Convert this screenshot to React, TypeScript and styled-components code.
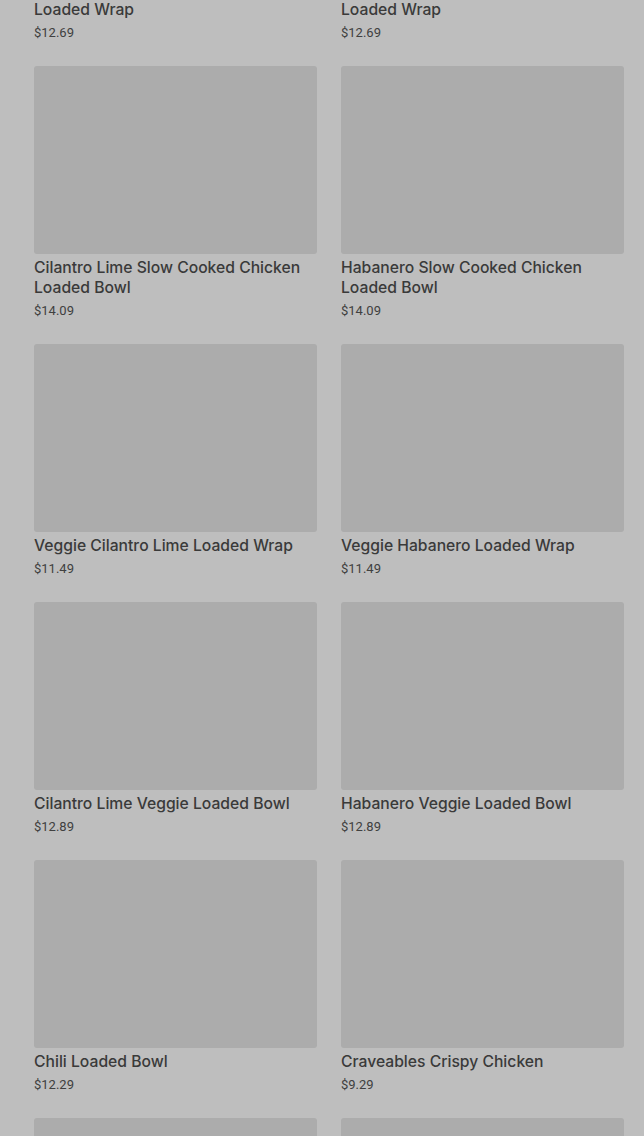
import React, { FC } from "react";
import styled, { createGlobalStyle } from "styled-components";

const GlobalStyle = createGlobalStyle`
  html, body {
    margin: 0;
    padding: 0;
    background: #bebebe;
    overflow: hidden;
  }
  body {
    font-family: Roboto, "Liberation Sans", Arial, sans-serif;
    -webkit-font-smoothing: antialiased;
  }
`;

const Page = styled.div`
  height: 1136px;
  overflow: hidden;
  padding: 0 20px 0 34px;
`;

// the list is scrolled, so the first row is partly above the window
const Grid = styled.div`
  display: grid;
  grid-template-columns: 1fr 1fr;
  column-gap: 24px;
  row-gap: 23px;
  margin-top: -212px;
`;

const Card = styled.div`
  display: flex;
  flex-direction: column;
  cursor: pointer;
`;

const Thumb = styled.div`
  height: 188px;
  border-radius: 3px;
  background: #acacac;
`;

const Title = styled.div`
  margin-top: 4px;
  font-family: Inter, Roboto, sans-serif;
  font-size: 15.7px;
  line-height: 20px;
  font-weight: 500;
  color: #3a3a3a;
`;

const Price = styled.div`
  margin-top: 3px;
  font-size: 13px;
  line-height: 20px;
  font-weight: 400;
  color: #404040;
`;

const items = [
  { name: "Cilantro Lime Slow Cooked Chicken Loaded Wrap", price: "$12.69" },
  { name: "Habanero Slow Cooked Chicken Loaded Wrap", price: "$12.69" },
  { name: "Cilantro Lime Slow Cooked Chicken Loaded Bowl", price: "$14.09" },
  { name: "Habanero Slow Cooked Chicken Loaded Bowl", price: "$14.09" },
  { name: "Veggie Cilantro Lime Loaded Wrap", price: "$11.49" },
  { name: "Veggie Habanero Loaded Wrap", price: "$11.49" },
  { name: "Cilantro Lime Veggie Loaded Bowl", price: "$12.89" },
  { name: "Habanero Veggie Loaded Bowl", price: "$12.89" },
  { name: "Chili Loaded Bowl", price: "$12.29" },
  { name: "Craveables Crispy Chicken", price: "$9.29" },
  { name: "Chicken Tenders", price: "$8.99" },
  { name: "Loaded Fries", price: "$6.49" },
];

const App: FC = () => {
  return (
    <>
      <GlobalStyle />
      <Page>
        <Grid>
          {items.map((item) => (
            <Card key={item.name}>
              <Thumb />
              <Title>{item.name}</Title>
              <Price>{item.price}</Price>
            </Card>
          ))}
        </Grid>
      </Page>
    </>
  );
};

export default App;
